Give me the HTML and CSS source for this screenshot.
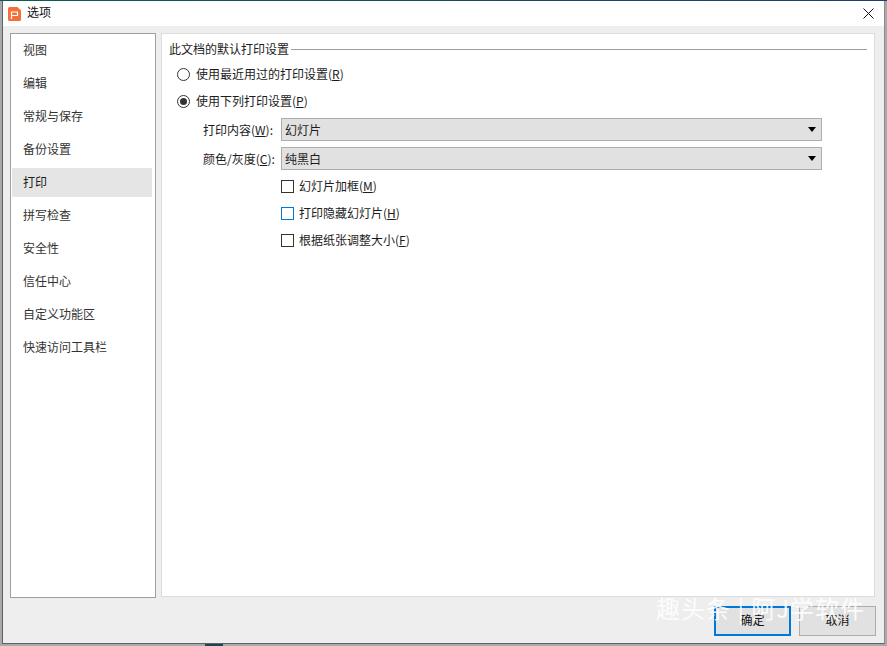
FILE: index.html
```html
<!DOCTYPE html>
<html lang="zh-CN">
<head>
<meta charset="utf-8">
<title>选项</title>
<link rel="stylesheet" href="styles.css">
</head>
<body>
<div class="desk-strip"></div>
<div class="desk-spot"></div>
<div class="dialog">
  <header class="titlebar">
    <svg class="app-icon" viewBox="0 0 13 14" width="13" height="14" aria-hidden="true">
      <path d="M1.5 0H9.5L13 3.5V12.5A1.5 1.5 0 0 1 11.5 14H1.5A1.5 1.5 0 0 1 0 12.5V1.5A1.5 1.5 0 0 1 1.5 0Z" fill="#f4703a"/>
      <path d="M3.5 12V5H9.5V8.5H3.5" fill="none" stroke="#fff" stroke-width="1.2"/>
    </svg>
    <span class="title">选项</span>
    <svg class="close" viewBox="0 0 11 11" width="11" height="11" aria-hidden="true">
      <path d="M0.5 0.5L10.5 10.5M10.5 0.5L0.5 10.5" stroke="#111" stroke-width="1" fill="none"/>
    </svg>
  </header>
  <div class="body">
    <nav class="sidebar">
      <div class="nav-item">视图</div>
      <div class="nav-item">编辑</div>
      <div class="nav-item">常规与保存</div>
      <div class="nav-item">备份设置</div>
      <div class="nav-item active">打印</div>
      <div class="nav-item">拼写检查</div>
      <div class="nav-item">安全性</div>
      <div class="nav-item">信任中心</div>
      <div class="nav-item">自定义功能区</div>
      <div class="nav-item">快速访问工具栏</div>
    </nav>
    <main class="panel">
      <div class="legend"><span>此文档的默认打印设置</span><i class="rule"></i></div>
      <div class="radio-row"><span class="radio"></span><span>使用最近用过的打印设置(<u>R</u>)</span></div>
      <div class="radio-row"><span class="radio on"></span><span>使用下列打印设置(<u>P</u>)</span></div>
      <div class="field first">
        <label class="field-label">打印内容(<u>W</u>):</label>
        <div class="select"><span>幻灯片</span><i class="caret"></i></div>
      </div>
      <div class="field">
        <label class="field-label">颜色/灰度(<u>C</u>):</label>
        <div class="select"><span>纯黑白</span><i class="caret"></i></div>
      </div>
      <div class="checks">
        <div class="check-row"><span class="check"></span><span>幻灯片加框(<u>M</u>)</span></div>
        <div class="check-row"><span class="check hover"></span><span>打印隐藏幻灯片(<u>H</u>)</span></div>
        <div class="check-row"><span class="check"></span><span>根据纸张调整大小(<u>F</u>)</span></div>
      </div>
    </main>
  </div>
  <footer class="footer">
    <button class="btn primary">确定</button>
    <button class="btn">取消</button>
  </footer>
</div>
<div class="watermark">趣头条 | 阿J学软件</div>
</body>
</html>
```
FILE: styles.css
```css
* { box-sizing: border-box; }
html, body { margin: 0; height: 100%; }
body {
  position: relative;
  width: 887px;
  height: 646px;
  overflow: hidden;
  padding: 1px 2px 2px 2px;
  background: #a6aaa9;
  font: 12px/16px "Noto Sans CJK SC", "Noto Sans", sans-serif;
  color: #1c1c1c;
}
.desk-strip {
  position: absolute;
  left: 0; top: 0; right: 0;
  height: 1px;
  background: linear-gradient(90deg, #0d5c55 0, #14505a 30%, #1f3f6b 100%);
}
.desk-spot {
  position: absolute;
  left: 205px; bottom: 0;
  width: 18px; height: 2px;
  background: #17465a;
}
.dialog {
  height: 100%;
  display: flex;
  flex-direction: column;
  background: #eeeeee;
  border: 1px solid #5f6362;
  border-top: 0;
  border-right-color: #8a8d8c;
}
.titlebar {
  flex: none;
  height: 25px;
  display: flex;
  align-items: center;
  padding: 0 10px 0 5px;
  background: #fff;
}
.app-icon { flex: none; margin-right: 6px; }
.title { font-size: 12px; color: #111; margin-bottom: 3px; }
.close { margin-left: auto; }
.body {
  flex: none;
  display: flex;
  padding: 7px 9px 0 7px;
  height: 572px;
}
.sidebar {
  width: 146px;
  height: 565px;
  margin-right: 5px;
  padding: 2px 3px 0 1px;
  background: #fff;
  border: 1px solid #a0a0a0;
  display: flex;
  flex-direction: column;
  gap: 4px;
}
.nav-item {
  height: 29px;
  line-height: 27px;
  padding-left: 11px;
  flex: none;
  color: #333;
}
.nav-item.active { background: #e5e5e5; color: #1c1c1c; }
.panel {
  flex: 1;
  height: 564px;
  padding: 7px 7px 0 7px;
  background: #fff;
  border: 1px solid #dcdcdc;
}
.legend { display: flex; align-items: center; height: 16px; gap: 2px; }
.rule { flex: 1; height: 1px; background: #a0a0a0; }
.radio-row {
  display: flex;
  align-items: center;
  height: 16px;
  margin-top: 9px;
  padding-left: 8px;
}
.radio-row + .radio-row { margin-top: 11px; }
.radio {
  width: 13px; height: 13px;
  margin-right: 6px;
  border: 1px solid #333;
  border-radius: 50%;
  background: #fff;
  flex: none;
  position: relative;
}
.radio.on::after {
  content: "";
  position: absolute;
  left: 2px; top: 2px;
  width: 7px; height: 7px;
  border-radius: 50%;
  background: #333;
}
.field {
  display: flex;
  align-items: center;
  margin-top: 6px;
  padding-left: 34px;
}
.field.first { margin-top: 9px; }
.field-label { width: 78px; flex: none; white-space: nowrap; }
.select {
  width: 541px;
  height: 23px;
  display: flex;
  align-items: center;
  justify-content: space-between;
  padding: 0 5px 0 3px;
  background: #e1e1e1;
  border: 1px solid #adadad;
}
.caret {
  width: 0; height: 0;
  border-left: 4px solid transparent;
  border-right: 4px solid transparent;
  border-top: 5px solid #000;
}
.checks {
  display: flex;
  flex-direction: column;
  gap: 11px;
  margin-top: 8px;
  padding-left: 112px;
}
.check-row { display: flex; align-items: center; height: 16px; }
.check {
  width: 13px; height: 13px;
  margin-right: 5px;
  flex: none;
  background: #fff;
  border: 1px solid #333;
}
.check.hover { border-color: #0078d7; }
.footer {
  flex: 1;
  display: flex;
  justify-content: flex-end;
  gap: 8px;
  padding: 8px 8px 0 0;
}
.btn {
  width: 77px;
  height: 30px;
  padding: 0 0 2px;
  background: #e1e1e1;
  border: 1px solid #adadad;
  font: inherit;
  color: #111;
}
.btn.primary { border: 2px solid #0078d7; }
.watermark {
  position: absolute;
  left: 656px;
  top: 591px;
  font-size: 24px;
  line-height: 34px;
  letter-spacing: 1px;
  color: rgba(255, 255, 255, 0.9);
  white-space: nowrap;
  font-family: "Noto Sans CJK SC", sans-serif;
}
```
